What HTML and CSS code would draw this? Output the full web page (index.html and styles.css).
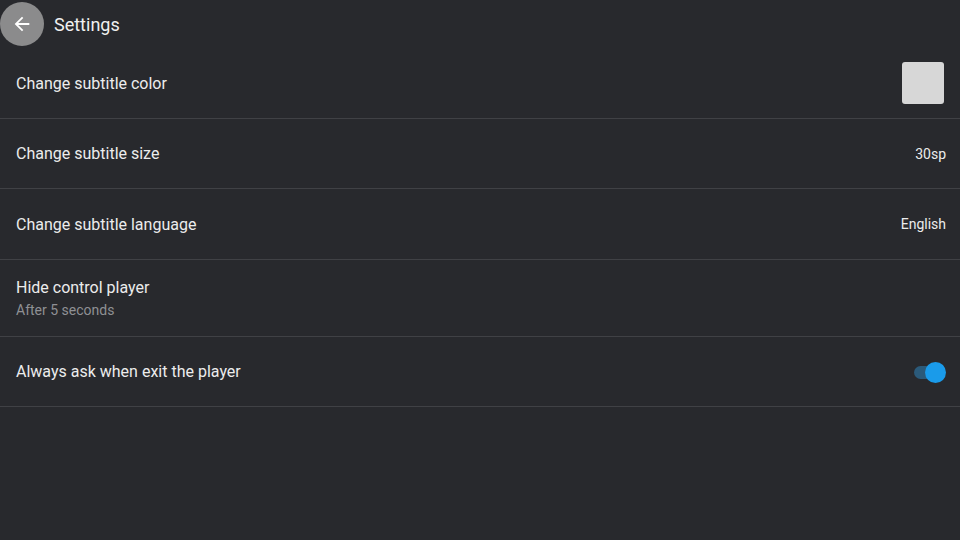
FILE: index.html
```html
<!DOCTYPE html>
<html>
<head>
<meta charset="utf-8">
<link rel="stylesheet" href="styles.css">
</head>
<body>
<div class="app">
  <header class="header">
    <div class="back">
      <svg width="22" height="22" viewBox="0 0 24 24"><path d="M20 11H7.83l5.59-5.59L12 4l-8 8 8 8 1.41-1.41L7.83 13H20v-2z" fill="#ffffff"/></svg>
    </div>
    <div class="title">Settings</div>
  </header>
  <div class="row r1">
    <div class="label">Change subtitle color</div>
    <div class="swatch"></div>
  </div>
  <div class="row r2">
    <div class="label">Change subtitle size</div>
    <div class="value">30sp</div>
  </div>
  <div class="row r3">
    <div class="label">Change subtitle language</div>
    <div class="value">English</div>
  </div>
  <div class="row r4">
    <div class="texts">
      <div class="label">Hide control player</div>
      <div class="sub">After 5 seconds</div>
    </div>
  </div>
  <div class="row r5">
    <div class="label">Always ask when exit the player</div>
    <div class="toggle"><div class="track"></div><div class="thumb"></div></div>
  </div>
</div>
</body>
</html>
```
FILE: styles.css
```css
html, body {
  margin: 0;
  padding: 0;
  background: #28292d;
  width: 960px;
  height: 540px;
  overflow: hidden;
  font-family: Roboto, "Liberation Sans", sans-serif;
}
.app {
  display: flex;
  flex-direction: column;
}
.header {
  height: 48px;
  display: flex;
  align-items: center;
  box-sizing: border-box;
  padding-bottom: 1px;
}
.back {
  width: 44px;
  height: 44px;
  border-radius: 50%;
  background: #8b8b8c;
  display: flex;
  align-items: center;
  justify-content: center;
}
.title {
  margin-left: 10px;
  margin-top: 2px;
  color: #f0f0f0;
  font-size: 18px;
}
.row {
  display: flex;
  align-items: center;
  justify-content: space-between;
  padding: 0 14px 0 16px;
  border-bottom: 1px solid #404145;
  box-sizing: border-box;
}
.r1 { height: 71px; }
.r2 { height: 70px; }
.r3 { height: 71px; }
.r4 { height: 77px; }
.r5 { height: 70px; }
.label {
  color: #ececec;
  font-size: 16px;
}
.value {
  color: #ececec;
  font-size: 14px;
}
.swatch {
  width: 42px;
  height: 42px;
  border-radius: 3px;
  background: #d7d7d7;
  margin-right: 2px;
}
.texts {
  display: flex;
  flex-direction: column;
  gap: 5px;
}
.sub {
  color: #8f9094;
  font-size: 14px;
}
.toggle {
  position: relative;
  width: 32px;
  height: 21px;
  margin-top: 1px;
}
.track {
  position: absolute;
  left: 0;
  top: 4px;
  width: 30px;
  height: 13px;
  border-radius: 7px;
  background: #2b5a7a;
}
.thumb {
  position: absolute;
  right: 0;
  top: 0;
  width: 21px;
  height: 21px;
  border-radius: 50%;
  background: #1a9bea;
}
```
